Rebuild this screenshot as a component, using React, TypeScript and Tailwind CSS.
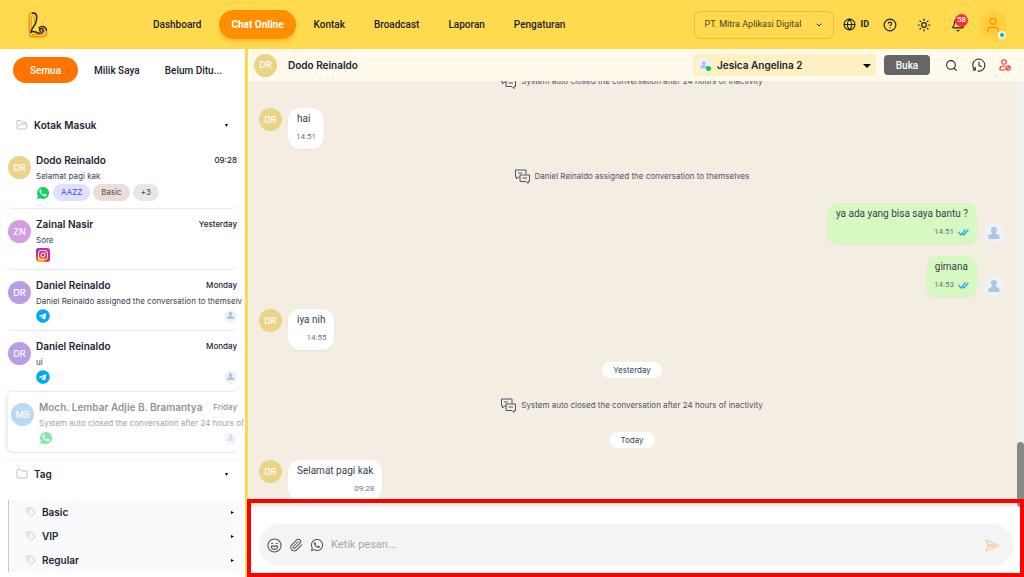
import React, { useState } from 'react';
import { Bell, ChevronDown, CircleHelp, Folder, FolderOpen, Globe, Paperclip, Search, Sun, Tag, User } from 'lucide-react';
import { FaTelegram, FaWhatsapp } from 'react-icons/fa';

type Channel = 'whatsapp' | 'instagram' | 'telegram';

interface Conversation {
  id: number;
  initials: string;
  color: string;
  name: string;
  preview: string;
  time: string;
  channel: Channel;
  assigned?: boolean;
  closed?: boolean;
  tags?: { label: string; className: string }[];
}

const navItems = ['Dashboard', 'Chat Online', 'Kontak', 'Broadcast', 'Laporan', 'Pengaturan'];

const conversations: Conversation[] = [
  {
    id: 1,
    initials: 'DR',
    color: 'bg-[#ebd388]',
    name: 'Dodo Reinaldo',
    preview: 'Selamat pagi kak',
    time: '09:28',
    channel: 'whatsapp',
    tags: [
      { label: 'AAZZ', className: 'bg-[#e0e0ff] text-[#4b45d8]' },
      { label: 'Basic', className: 'bg-[#e8dedb] text-[#6f4436]' },
      { label: '+3', className: 'bg-[#e5e7eb] text-[#374151]' },
    ],
  },
  { id: 2, initials: 'ZN', color: 'bg-[#d29de3]', name: 'Zainal Nasir', preview: 'Sore', time: 'Yesterday', channel: 'instagram' },
  {
    id: 3,
    initials: 'DR',
    color: 'bg-[#b99de5]',
    name: 'Daniel Reinaldo',
    preview: 'Daniel Reinaldo assigned the conversation to themselv',
    time: 'Monday',
    channel: 'telegram',
    assigned: true,
  },
  { id: 4, initials: 'DR', color: 'bg-[#b99de5]', name: 'Daniel Reinaldo', preview: 'ui', time: 'Monday', channel: 'telegram', assigned: true },
  {
    id: 5,
    initials: 'MB',
    color: 'bg-[#74b6ea]',
    name: 'Moch. Lembar Adjie B. Bramantya',
    preview: 'System auto closed the conversation after 24 hours of',
    time: 'Friday',
    channel: 'whatsapp',
    assigned: true,
    closed: true,
  },
];

const tags = ['Basic', 'VIP', 'Regular'];

function Logo() {
  return (
    <svg viewBox="0 0 20 26" className="h-[26px] w-5" fill="none" strokeLinecap="round" strokeLinejoin="round" aria-label="Logo">
      <path d="M1.2 20.500V4C1.200.5 4.500.5 6 1.200" stroke="#f58a07" strokeWidth="1.300" />
      <path d="M3.300 18.500V5.500c0-2.500 3-2.500 3 0v5" stroke="#f58a07" strokeWidth="1" />
      <path d="M1.500 22c-.5 3.500 4 3 7.500 2.500 4 1 9.700.5 9.700-4 0-3-2.200-5-4.700-5" stroke="#f58a07" strokeWidth="1.400" />
      <path d="M4.500 23c3-2.500 6 .5 9.500-.5 2-.8 3-2.500 2-4.500" stroke="#f58a07" strokeWidth="1.200" />
      <path d="M4.500 1.200c5-.8 4.800 5 3.300 9.200-1.200 3.500-4.300 6-5 10 3.500-3.500 6.500 2.300 10.500.5 2.700-1.300 2.200-4.500 0-4.500-1.800 0-2.200 2-1 2.800" stroke="#1f2a24" strokeWidth="1.500" />
      <path d="M11 15.800c3-3 7.500-1 7.500 2.700" stroke="#1f2a24" strokeWidth="1.300" />
    </svg>
  );
}

function Person({ className }: { className: string }) {
  return (
    <span className={`flex shrink-0 items-center justify-center rounded-full bg-[#eff1f5] ${className}`}>
      <svg viewBox="0 0 12 12" className="h-[54%] w-[54%]" fill="#a9c6e2">
        <path d="M6 0a3 3 0 0 1 3 3c0 1.200-.6 2-1.300 2.700v1C10 7.200 11.800 8 11.800 10.300c0 .9-.5 1.700-1.300 1.700h-9C.7 12 .2 11.200.2 10.300.2 8 2 7.200 4.300 6.700v-1C3.600 5 3 4.200 3 3a3 3 0 0 1 3-3Z" />
      </svg>
    </span>
  );
}

function Avatar({ initials, color }: { initials: string; color: string }) {
  return (
    <span className={`flex h-[23px] w-[23px] shrink-0 items-center justify-center rounded-full font-['Inter',sans-serif] text-[9px] font-medium text-white ${color}`}>
      {initials}
    </span>
  );
}

function Caret({ className = '' }: { className?: string }) {
  return (
    <svg viewBox="0 0 4 4" className={`h-[3px] w-[3px] ${className}`}>
      <path d="M0 0h4L2 4Z" />
    </svg>
  );
}

function WhatsappBadge() {
  return (
    <svg viewBox="0 0 24 24" className="mx-px h-3 w-3 shrink-0">
      <path d="M12 0a12 12 0 0 0-10.300 18L0 24l6.200-1.600A12 12 0 1 0 12 0Z" fill="#10d35c" />
      <path
        d="M8.500 6c-.4-.8-.7-.8-1.200-.8-.5 0-1 .2-1.500.8-1.500 1.700-1 4.200.8 6.700 2.100 3 4.600 5 7.600 5.900 2.200.6 4.400-.6 4.700-2.300.2-.8.1-1.200-.3-1.400l-2.700-1.300c-.4-.2-.7-.1-1 .2l-1.100 1.400c-.3.300-.5.300-.9.100-2-.9-3.500-2.200-4.500-4-.2-.4-.1-.6.1-.8l.8-1c.2-.3.200-.6.100-.9Z"
        fill="#fff"
      />
    </svg>
  );
}

function InstagramBadge() {
  return (
    <svg viewBox="0 0 28 28" className="h-[14px] w-[14px] shrink-0">
      <defs>
        <radialGradient id="ig-warm" cx=".3" cy="1.050" r="1">
          <stop offset="0" stopColor="#ffd040" />
          <stop offset=".25" stopColor="#ff9a1e" />
          <stop offset=".55" stopColor="#f9243f" />
          <stop offset="1" stopColor="#cb1fc0" />
        </radialGradient>
        <radialGradient id="ig-cool" cx="0" cy="0" r=".6">
          <stop offset="0" stopColor="#3f5cf5" />
          <stop offset="1" stopColor="#8f30e8" stopOpacity="0" />
        </radialGradient>
      </defs>
      <rect width="28" height="28" rx="6" fill="url(#ig-warm)" />
      <rect width="28" height="28" rx="6" fill="url(#ig-cool)" />
      <rect x="5" y="5" width="18" height="18" rx="5" fill="none" stroke="#fff" strokeWidth="2" />
      <circle cx="14" cy="14" r="4.200" fill="none" stroke="#fff" strokeWidth="2" />
      <circle cx="19" cy="9" r="1.200" fill="#fff" />
    </svg>
  );
}

function ChannelBadge({ channel }: { channel: Channel }) {
  if (channel === 'whatsapp') return <WhatsappBadge />;
  if (channel === 'instagram') return <InstagramBadge />;
  return <FaTelegram className="h-[14px] w-[14px] shrink-0 text-[#00a9f4]" />;
}

function ConversationItem({ item }: { item: Conversation }) {
  return (
    <li className={`rounded-lg border-b border-[#e9eaec] ${item.closed ? 'border-l-[3px] border-l-[#f0f1f3]' : ''}`}>
      <button className={`flex w-full gap-[5px] pb-[7px] pl-[3px] pt-2 text-left font-['Inter',sans-serif] ${item.closed ? 'opacity-50' : ''}`}>
        <span className="pt-[3px]">
          <Avatar initials={item.initials} color={item.color} />
        </span>
        <span className="min-w-0 flex-1">
          <span className="flex h-[14px] items-center justify-between gap-2 pr-[2px]">
            <span className="whitespace-nowrap text-[10px] font-semibold">{item.name}</span>
            <span className="text-[8px] font-medium">{item.time}</span>
          </span>
          <span className="mt-[2px] block h-[14px] whitespace-nowrap text-[8px] leading-[14px] text-[#374151]">{item.preview}</span>
          <span className="mt-[1px] flex min-h-[14px] items-center gap-[3px]">
            <ChannelBadge channel={item.channel} />
            {item.tags?.map((tag) => (
              <span key={tag.label} className={`rounded-full px-2 text-[8px] leading-[17px] ${tag.className}`}>
                {tag.label}
              </span>
            ))}
            {item.assigned && <Person className="ml-auto mr-[2px] h-[13px] w-[13px]" />}
          </span>
        </span>
      </button>
    </li>
  );
}

function Sidebar() {
  const [tab, setTab] = useState('Semua');

  return (
    <aside className="flex w-[248px] shrink-0 flex-col border-r-[3px] border-[#ffda4f] bg-white pl-[5px] pr-[6px]">
      <div className="flex items-center gap-[7px] px-2 pt-2">
        {['Semua', 'Milik Saya', 'Belum Ditu...'].map((label) => (
          <button
            key={label}
            onClick={() => setTab(label)}
            className={`h-[26px] whitespace-nowrap rounded-full text-[10px] font-medium ${tab === label ? 'w-[70px] bg-[#ff7300] text-white' : 'px-[9px]'}`}
          >
            {label}
          </button>
        ))}
      </div>

      <button className="mt-[32px] flex h-5 items-center gap-[6px] pl-[11px] pr-[11px] font-['Inter',sans-serif] text-[10px] font-semibold">
        <FolderOpen className="h-3 w-3 text-[#a3acc6]" strokeWidth={1.5} />
        Kotak Masuk
        <Caret className="ml-auto" />
      </button>

      <ul className="mt-[10px]">
        {conversations.map((item) => (
          <ConversationItem key={item.id} item={item} />
        ))}
      </ul>

      <div className="mt-[6px] border-t border-[#f3f4f6] pt-1">
        <button className="flex h-5 w-full items-center gap-[6px] pl-[11px] pr-[11px] font-['Inter',sans-serif] text-[10px] font-semibold">
          <Folder className="h-3 w-3 text-[#a3acc6]" strokeWidth={1.5} />
          Tag
          <Caret className="ml-auto" />
        </button>
      </div>
      <ul className="ml-[3px] mt-4 border-l border-[#c3c9dc] bg-[#f8fafc]">
        {tags.map((tag) => (
          <li key={tag}>
            <button className="flex h-6 w-full items-center gap-[6px] pl-[17px] pr-[5px] font-['Inter',sans-serif] text-[10px] font-semibold">
              <Tag className="h-[10px] w-[10px] text-[#a5aec6]" strokeWidth={1.5} />
              {tag}
              <Caret className="ml-auto -rotate-90" />
            </button>
          </li>
        ))}
      </ul>
    </aside>
  );
}

function Header() {
  return (
    <header className="flex h-[49px] shrink-0 items-center bg-[#ffda4f] pr-[17px]">
      <a href="#" className="w-[141px] pl-7">
        <Logo />
      </a>
      <nav className="flex items-center gap-[5px] text-[10px]">
        {navItems.map((item) => (
          <a
            key={item}
            href="#"
            className={`flex h-[29px] items-center whitespace-nowrap rounded-full px-3 ${
              item === 'Chat Online' ? 'mx-px bg-[#ff8f00] font-bold text-white shadow-md shadow-[#ff8f00]/30' : 'font-medium'
            }`}
          >
            {item}
          </a>
        ))}
      </nav>

      <div className="ml-auto flex items-center">
        <div className="relative flex">
          <select aria-label="Perusahaan" className="h-7 w-[140px] appearance-none rounded-md border border-[#e3bd3b] bg-transparent pl-[10px] text-[9px] text-[#4a431f]">
            <option>PT. Mitra Aplikasi Digital</option>
          </select>
          <ChevronDown className="pointer-events-none absolute right-[11px] top-[10px] h-2 w-2" strokeWidth={3} />
        </div>
        <button className="ml-[9px] flex items-center gap-[5px] text-[9px] font-bold">
          <Globe className="h-[13px] w-[13px]" />
          ID
        </button>
        <button aria-label="Bantuan" className="ml-[14px]">
          <CircleHelp className="h-[14px] w-[14px]" />
        </button>
        <button aria-label="Tema" className="ml-5">
          <Sun className="h-[14px] w-[14px]" />
        </button>
        <button aria-label="Notifikasi" className="relative ml-5">
          <Bell className="h-[14px] w-[14px]" />
          <span className="absolute -right-[3px] -top-[4px] flex h-[13px] w-[13px] items-center justify-center rounded-full bg-[#fb2c36] text-[8px] font-medium text-white">58</span>
        </button>
        <button aria-label="Profil" className="relative ml-[14px] flex h-7 w-7 items-center justify-center rounded-full bg-[#ffcf3c]">
          <User className="h-[18px] w-[18px] text-[#ff9500]" strokeWidth={1.75} />
          <span className="absolute bottom-0 right-[1px] h-2 w-2 rounded-full border-2 border-[#eef2f7] bg-[#10b981]" />
        </button>
      </div>
    </header>
  );
}

function ChatHeader() {
  return (
    <div className="flex h-8 shrink-0 items-center bg-[#fffaec] pl-[6px] pr-[13px]">
      <Avatar initials="DR" color="bg-[#ebd388]" />
      <h1 className="ml-[11px] font-['Inter',sans-serif] text-[10px] font-semibold">Dodo Reinaldo</h1>
      <div className="relative ml-auto flex">
        <select aria-label="Agen" className="h-[22px] w-[183px] appearance-none rounded bg-[#fff0c2] pl-6 font-['Inter',sans-serif] text-[10px] font-semibold">
          <option>Jesica Angelina 2</option>
        </select>
        <Person className="pointer-events-none absolute left-1 top-1 h-[14px] w-[14px]" />
        <span className="absolute left-[13px] top-3 h-[5px] w-[5px] rounded-full bg-[#12c25b]" />
        <svg viewBox="0 0 8 4" className="pointer-events-none absolute right-[5px] top-[10px] h-1 w-2">
          <path d="M0 0h8L4 4Z" />
        </svg>
      </div>
      <button className="ml-2 h-5 w-[46px] rounded bg-[#666] text-[10px] font-medium text-white">Buka</button>
      <button aria-label="Cari" className="ml-[15px]">
        <Search className="h-[13px] w-[13px]" />
      </button>
      <button aria-label="Riwayat" className="ml-[14px]">
        <svg viewBox="0 0 24 24" className="h-[14px] w-[14px]" fill="none" stroke="currentColor" strokeWidth="1.800" strokeLinecap="round">
          <path d="M5 20a10.300 10.300 0 1 1 5 2.300" />
          <path d="M5.500 16v4.500H1.500M12 7v6l4 1.500" />
        </svg>
      </button>
      <button aria-label="Lepas agen" className="ml-[13px] text-[#fb2c36]">
        <svg viewBox="0 0 24 24" className="h-3 w-3" fill="none" stroke="currentColor" strokeWidth="2.200" strokeLinecap="round">
          <circle cx="10" cy="6" r="4.500" />
          <path d="M11 14H8c-4 0-6 2.500-6 5.500V22h9" />
          <circle cx="18" cy="18" r="4.500" />
          <path d="m15 21 6-6" />
        </svg>
      </button>
    </div>
  );
}

function Incoming({ text, time }: { text: string; time: string }) {
  return (
    <div className="flex items-start gap-[6px]">
      <Avatar initials="DR" color="bg-[#ebd388]" />
      <div className="h-[41px] rounded-xl bg-white px-2 pt-1 shadow-xs">
        <p className="px-px text-[10px] leading-[14px] text-[#374151]">{text}</p>
        <p className="mt-1 text-right text-[8px] leading-[14px] text-[#6b7280]">{time}</p>
      </div>
    </div>
  );
}

function Outgoing({ text, time }: { text: string; time: string }) {
  return (
    <div className="flex items-end justify-end gap-[6px]">
      <div className="h-[41px] rounded-xl bg-[#d5f9c0] px-2 pt-1 shadow-xs">
        <p className="px-px text-[10px] leading-[14px] text-[#374151]">{text}</p>
        <p className="mt-1 flex items-center justify-end gap-1 text-[8px] leading-[14px] text-[#6b7280]">
          {time}
          <svg viewBox="0 0 22 14" className="h-[7px] w-[11px]" fill="none" stroke="#35a9ee" strokeWidth="2.800">
            <path d="m1 6 5 6L15 1M9 9l3 3L21 1" />
          </svg>
        </p>
      </div>
      <Person className="h-[22px] w-[22px]" />
    </div>
  );
}

function SystemNote({ text }: { text: string }) {
  return (
    <div className="flex h-[30px] shrink-0 items-center justify-center gap-[5px] text-[#4b5563]">
      <svg viewBox="0 0 30 30" className="h-[15px] w-[15px]" fill="none" stroke="currentColor" strokeWidth="2" strokeLinejoin="round">
        <path d="M10 16H7l-4 4v-4H1V2h21v9" />
        <path d="M10 12h19v13h-3v4l-4-4H10ZM6 8h8M15 18h9" />
      </svg>
      <p className="font-['Inter',sans-serif] text-[8px]">{text}</p>
    </div>
  );
}

function DayPill({ label }: { label: string }) {
  return <div className="self-center rounded-full bg-white px-[11px] font-['Inter',sans-serif] text-[8px] leading-4 text-[#374151]">{label}</div>;
}

function Composer() {
  const [message, setMessage] = useState('');

  return (
    <div className="relative shrink-0 bg-white pb-[11px] pl-[11px] pr-[11px] pt-[17px]">
      <form onSubmit={(e) => e.preventDefault()} className="flex h-[42px] items-center rounded-full bg-[#f4f4f4] pl-2 pr-[13px] text-[#4b5563]">
        <button type="button" aria-label="Emoji">
          <svg viewBox="0 0 24 24" className="h-[15px] w-[15px]" fill="none" stroke="currentColor" strokeWidth="1.700" strokeLinejoin="round">
            <circle cx="12" cy="12" r="10.500" />
            <path d="M7 13h10c0 3-2 5.200-5 5.200S7 16 7 13ZM7 9.500c.5-1.500 2-1.500 2.500 0M14.500 9.500c.5-1.500 2-1.500 2.500 0" />
          </svg>
        </button>
        <button type="button" aria-label="Lampiran" className="ml-[7px]">
          <Paperclip className="h-[14px] w-[14px]" strokeWidth={1.75} />
        </button>
        <button type="button" aria-label="Template WhatsApp" className="ml-[7px]">
          <FaWhatsapp className="h-[14px] w-[14px]" />
        </button>
        <input
          aria-label="Pesan"
          value={message}
          onChange={(e) => setMessage(e.target.value)}
          placeholder="Ketik pesan..."
          className="ml-[7px] min-w-0 flex-1 bg-transparent text-[11px] outline-none placeholder:text-[#a3a8b3]"
        />
        <button aria-label="Kirim" className="text-[#ffc58c]">
          <svg viewBox="0 0 30 26" className="h-[13px] w-[15px]" fill="none" stroke="currentColor" strokeWidth="2" strokeLinejoin="round">
            <path d="M2 2l26 11L2 24l4-11ZM6 11.500h13v3H6" />
          </svg>
        </button>
      </form>
      <div className="pointer-events-none absolute -left-px -top-2 bottom-0 right-0 border-4 border-[#ff0000]" />
    </div>
  );
}

export default function App() {
  return (
    <div className="flex h-screen flex-col overflow-hidden font-['Roboto',sans-serif] text-[#1b2333]">
      <Header />
      <div className="flex min-h-0 flex-1">
        <Sidebar />
        <main className="flex min-w-0 flex-1 flex-col">
          <ChatHeader />
          <div className="flex min-h-0 flex-1 bg-[#f4ede2]">
            <div className="flex flex-1 flex-col justify-end gap-3 overflow-hidden pb-[6px] pl-[11px] pr-3">
              <SystemNote text="System auto closed the conversation after 24 hours of inactivity" />
              <Incoming text="hai" time="14:51" />
              <SystemNote text="Daniel Reinaldo assigned the conversation to themselves" />
              <Outgoing text="ya ada yang bisa saya bantu ?" time="14:51" />
              <Outgoing text="gimana" time="14:53" />
              <Incoming text="iya nih" time="14:55" />
              <DayPill label="Yesterday" />
              <SystemNote text="System auto closed the conversation after 24 hours of inactivity" />
              <DayPill label="Today" />
              <Incoming text="Selamat pagi kak" time="09:28" />
            </div>
            <div className="flex w-[7px] flex-col justify-end bg-[#f1f1f1]">
              <div className="h-[65px] rounded-full bg-[#888]" />
            </div>
          </div>
          <Composer />
        </main>
      </div>
    </div>
  );
}
